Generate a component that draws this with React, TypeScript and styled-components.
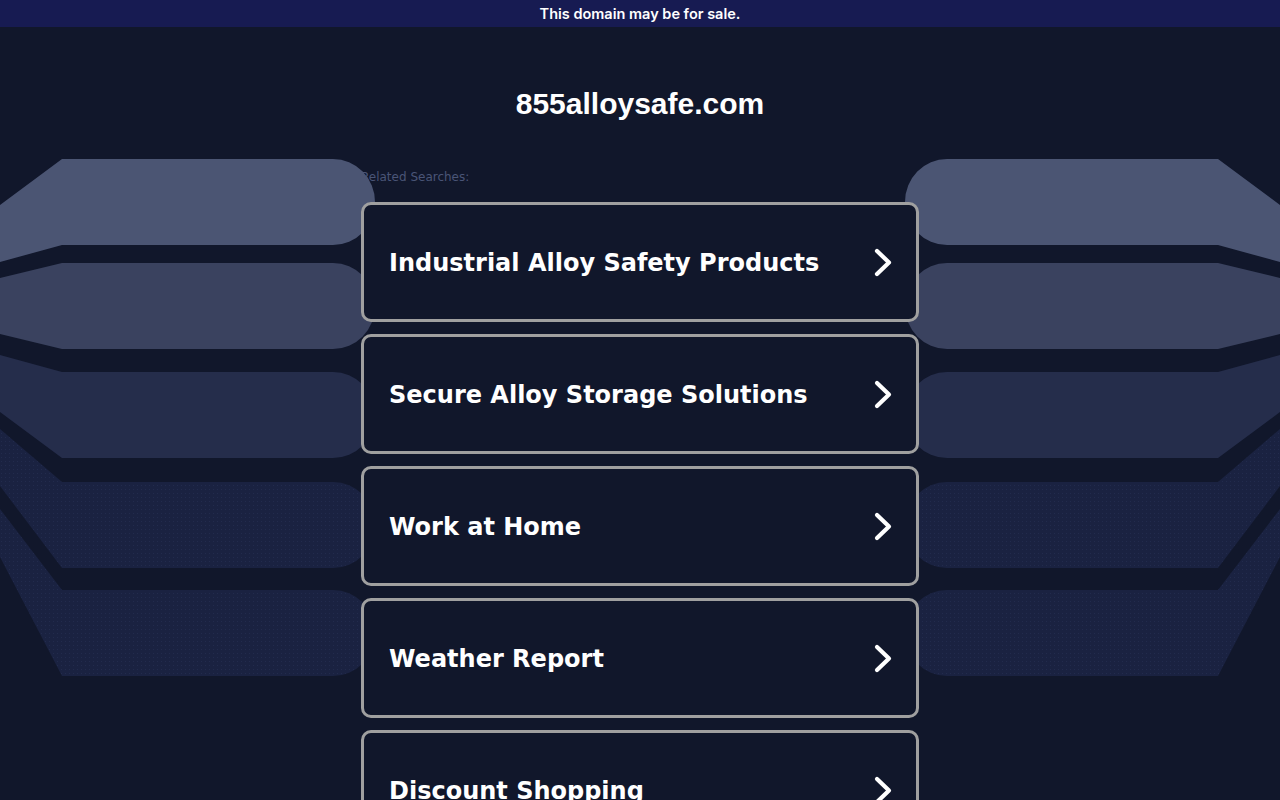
import React from 'react'
import styled, { createGlobalStyle } from 'styled-components'

const GlobalStyle = createGlobalStyle`
  html, body {
    margin: 0;
    padding: 0;
    background: #11172b;
  }
  body {
    font-family: "DejaVu Sans", Verdana, sans-serif;
  }
`

const Page = styled.div`
  position: relative;
  min-height: 800px;
  overflow: hidden;
  background: #11172b;
`

const TopBar = styled.div`
  height: 27px;
  background: #171b52;
  color: #fff;
  font-family: Inter, "Noto Sans", sans-serif;
  font-weight: 600;
  font-size: 14.5px;
  line-height: 27px;
  text-align: center;
`

const Decor = styled.svg`
  position: absolute;
  top: 0;
  left: 0;
  width: 1280px;
  height: 800px;
`

const Main = styled.main`
  width: 558px;
  margin: 0 auto;
  display: flex;
  flex-direction: column;
`

const Domain = styled.h1`
  margin: 59px 0 0;
  font-family: "Liberation Sans", Arial, sans-serif;
  font-weight: 700;
  font-size: 30px;
  line-height: 36px;
  color: #fff;
  text-align: center;
`

const Label = styled.div`
  margin-top: 47px;
  font-family: "DejaVu Sans", Verdana, sans-serif;
  font-size: 12px;
  line-height: 16px;
  color: #4a5577;
`

const List = styled.div`
  margin-top: 17px;
  display: flex;
  flex-direction: column;
  gap: 12px;
`

const Card = styled.a`
  position: relative;
  z-index: 1;
  box-sizing: border-box;
  height: 120px;
  display: flex;
  align-items: center;
  justify-content: space-between;
  padding: 2px 23px 0 25px;
  border: 3px solid #a0a0a0;
  border-radius: 10px;
  background: #11172b;
  color: #fff;
  text-decoration: none;
  font-family: "DejaVu Sans", Verdana, sans-serif;
  font-weight: 700;
  font-size: 24px;
`

const Chevron = () => (
  <svg width="22" height="32" viewBox="0 0 22 32">
    <polyline
      points="6,4 18,15.5 6,27"
      fill="none"
      stroke="#fff"
      strokeWidth="4.2"
      strokeLinecap="round"
      strokeLinejoin="round"
    />
  </svg>
)

const bands = [
  { t: 159, b: 245, a: 205, c: 262, fill: '#4b5573' },
  { t: 263, b: 349, a: 278, c: 334, fill: '#3a425f' },
  { t: 372, b: 458, a: 355, c: 412, fill: '#252d4b' },
  { t: 482, b: 568, a: 429, c: 486, fill: 'url(#dots)' },
  { t: 590, b: 676, a: 509, c: 557, fill: 'url(#dots)' },
]

const bandPath = (t: number, b: number, a: number, c: number) => {
  const r = 42
  const m = (t + b) / 2
  return `M0 ${a} L62 ${t} H${375 - r} A${r} ${m - t} 0 0 1 375 ${m} A${r} ${b - m} 0 0 1 ${375 - r} ${b} H62 L0 ${c} Z`
}

const Bands = () => (
  <Decor viewBox="0 0 1280 800">
    <defs>
      <pattern id="dots" width="4" height="4" patternUnits="userSpaceOnUse">
        <rect width="4" height="4" fill="#1a2241" />
        <rect x="1" y="1" width="1" height="1" fill="#222b4d" />
      </pattern>
    </defs>
    {bands.map((band, i) => (
      <path key={`l${i}`} d={bandPath(band.t, band.b, band.a, band.c)} fill={band.fill} />
    ))}
    <g transform="translate(1280 0) scale(-1 1)">
      {bands.map((band, i) => (
        <path key={`r${i}`} d={bandPath(band.t, band.b, band.a, band.c)} fill={band.fill} />
      ))}
    </g>
  </Decor>
)

const searches = [
  'Industrial Alloy Safety Products',
  'Secure Alloy Storage Solutions',
  'Work at Home',
  'Weather Report',
  'Discount Shopping',
]

const App = () => {
  return (
    <Page>
      <GlobalStyle />
      <TopBar>This domain may be for sale.</TopBar>
      <Bands />
      <Main>
        <Domain>855alloysafe.com</Domain>
        <Label>Related Searches:</Label>
        <List>
          {searches.map((s) => (
            <Card key={s} href="#">
              <span>{s}</span>
              <Chevron />
            </Card>
          ))}
        </List>
      </Main>
    </Page>
  )
}

export default App
